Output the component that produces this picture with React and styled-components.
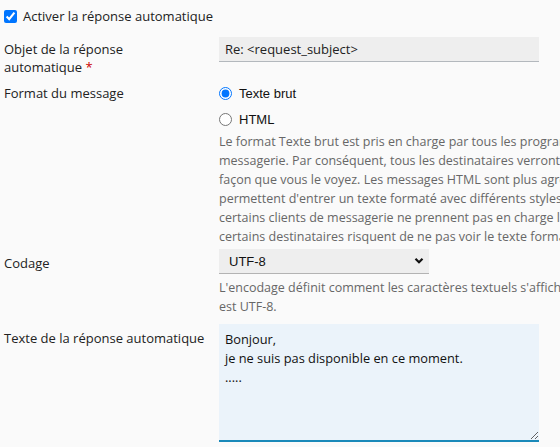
import React, { useEffect, useRef } from 'react';
import styled, { createGlobalStyle } from 'styled-components';

const GlobalStyle = createGlobalStyle`
  html, body {
    margin: 0;
    padding: 0;
    background: #fafafa;
    overflow: hidden;
  }
  body {
    font-family: "Open Sans", "Noto Sans", sans-serif;
    font-size: 13px;
    color: #222;
  }
`;

const Page = styled.div`
  width: 560px;
  height: 447px;
  overflow: hidden;
  padding: 8px 0 0 4px;
  box-sizing: border-box;
`;

const Toggle = styled.label`
  display: flex;
  align-items: center;
  gap: 6px;
  height: 16px;
  line-height: 16px;
  white-space: nowrap;

  input {
    margin: 0;
    width: 13px;
    height: 13px;
  }
`;

const Form = styled.div`
  display: grid;
  grid-template-columns: 215px 320px;
  margin-top: 13px;
`;

const Label = styled.div`
  line-height: 18px;
  padding-top: ${(p) => p.$top || 0}px;
  white-space: nowrap;
`;

const Required = styled.span`
  color: #c00;
`;

const Field = styled.div`
  display: flex;
  flex-direction: column;
  padding-bottom: ${(p) => p.$gap || 0}px;
`;

const TextInput = styled.input`
  box-sizing: border-box;
  width: 320px;
  height: 25px;
  margin: 0;
  border: none;
  border-bottom: 1px solid #b3b8bd;
  background: #eeeeee;
  padding: 0 6px;
  font-family: "Open Sans", sans-serif;
  font-size: 13px;
  color: #222;
  outline: none;
`;

const RadioRow = styled.label`
  display: flex;
  align-items: center;
  gap: 7px;
  height: 26px;
  font-family: "Liberation Sans", Arial, sans-serif;
  font-size: 13px;
  color: #111;

  input {
    margin: 0;
    width: 13px;
    height: 13px;
  }
`;

const Help = styled.div`
  color: #676767;
  font-size: 12.5px;
  line-height: 19px;
  white-space: nowrap;
  margin-top: ${(p) => p.$top || 0}px;
`;

const SelectWrap = styled.div`
  position: relative;
  width: 210px;
  height: 25px;
`;

const Select = styled.select`
  appearance: none;
  box-sizing: border-box;
  width: 100%;
  height: 25px;
  margin: 0;
  border: none;
  border-bottom: 1px solid #b3b3b3;
  background: #eeeeee;
  padding: 0 10px;
  font-family: "Liberation Sans", Arial, sans-serif;
  font-size: 13px;
  color: #111;
  outline: none;
`;

const Chevron = styled.svg`
  position: absolute;
  right: 5px;
  top: 8px;
  pointer-events: none;
`;

const TextArea = styled.textarea`
  box-sizing: border-box;
  width: 320px;
  height: 118px;
  margin: 0;
  display: block;
  border: none;
  border-bottom: 2px solid #1a89b9;
  background: #ebf3fa;
  padding: 6px 6px 4px;
  font-family: "Open Sans", sans-serif;
  font-size: 12.8px;
  line-height: 19px;
  color: #111;
  outline: none;
  resize: both;
  caret-color: #000;
`;

const formatHelp = [
  'Le format Texte brut est pris en charge par tous les programmes de',
  'messagerie. Par conséquent, tous les destinataires verront le message de la même',
  'façon que vous le voyez. Les messages HTML sont plus agréables à lire et',
  "permettent d'entrer un texte formaté avec différents styles de police. Cependant,",
  'certains clients de messagerie ne prennent pas en charge le format HTML, donc',
  'certains destinataires risquent de ne pas voir le texte formaté.',
];

const encodingHelp = [
  "L'encodage définit comment les caractères textuels s'affichent. L'encodage recommandé",
  'est UTF-8.',
];

export default function App() {
  const areaRef = useRef(null);
  const body = 'Bonjour,\nje ne suis pas disponible en ce moment.\n.....';

  useEffect(() => {
    const el = areaRef.current;
    if (el) {
      el.focus();
      el.setSelectionRange(body.length, body.length);
    }
  }, []);

  return (
    <>
      <GlobalStyle />
      <Page>
        <Toggle>
          <input type="checkbox" defaultChecked />
          Activer la réponse automatique
        </Toggle>

        <Form>
          <Label $top={3}>
            Objet de la réponse
            <br />
            automatique <Required>*</Required>
          </Label>
          <Field $gap={18}>
            <TextInput defaultValue="Re: <request_subject>" />
          </Field>

          <Label $top={4}>Format du message</Label>
          <Field $gap={3}>
            <RadioRow>
              <input type="radio" name="fmt" defaultChecked />
              Texte brut
            </RadioRow>
            <RadioRow>
              <input type="radio" name="fmt" />
              HTML
            </RadioRow>
            <Help>
              {formatHelp.map((line) => (
                <div key={line}>{line}</div>
              ))}
            </Help>
          </Field>

          <Label $top={5}>Codage</Label>
          <Field $gap={8}>
            <SelectWrap>
              <Select defaultValue="UTF-8">
                <option>UTF-8</option>
                <option>ISO-8859-1</option>
              </Select>
              <Chevron width="10" height="8" viewBox="0 0 10 8">
                <path d="M1.5 1.8 L5 5.3 L8.5 1.8" fill="none" stroke="#111" strokeWidth="2.2" />
              </Chevron>
            </SelectWrap>
            <Help $top={4}>
              {encodingHelp.map((line) => (
                <div key={line}>{line}</div>
              ))}
            </Help>
          </Field>

          <Label $top={5}>Texte de la réponse automatique</Label>
          <Field>
            <TextArea ref={areaRef} defaultValue={body} />
          </Field>
        </Form>
      </Page>
    </>
  );
}
